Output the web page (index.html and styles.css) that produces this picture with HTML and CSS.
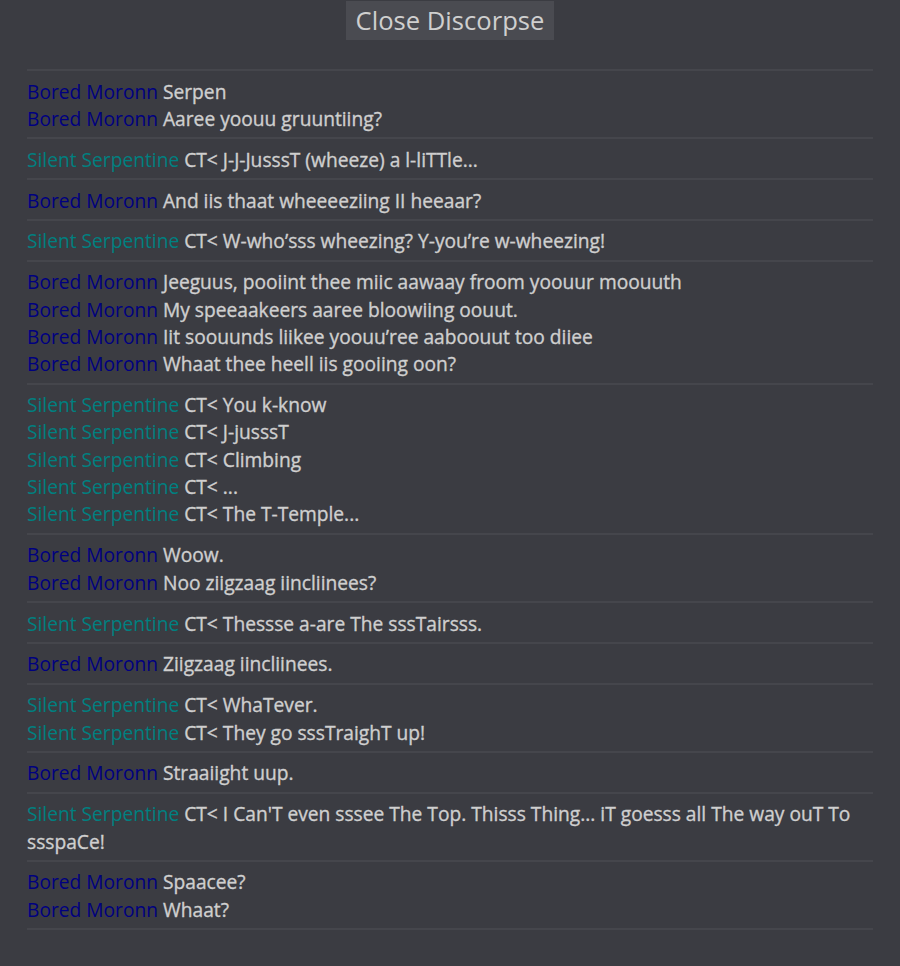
FILE: index.html
```html
<!DOCTYPE html>
<html>
<head>
<meta charset="utf-8">
<link rel="stylesheet" href="styles.css">
</head>
<body>
<div class="page">
  <div class="top">
    <button class="close-btn">Close Discorpse</button>
  </div>
  <div class="log">
    <div class="group">
      <div class="line"><span class="bm">Bored Moronn</span> Serpen</div>
      <div class="line"><span class="bm">Bored Moronn</span> Aaree yoouu gruuntiing?</div>
    </div>
    <div class="group">
      <div class="line"><span class="ss">Silent Serpentine</span> CT&lt; J-J-JusssT (wheeze) a l-liTTle...</div>
    </div>
    <div class="group">
      <div class="line"><span class="bm">Bored Moronn</span> And iis thaat wheeeeziing II heeaar?</div>
    </div>
    <div class="group">
      <div class="line"><span class="ss">Silent Serpentine</span> CT&lt; W-who’sss wheezing? Y-you’re w-wheezing!</div>
    </div>
    <div class="group">
      <div class="line"><span class="bm">Bored Moronn</span> Jeeguus, pooiint thee miic aawaay froom yoouur moouuth</div>
      <div class="line"><span class="bm">Bored Moronn</span> My speeaakeers aaree bloowiing oouut.</div>
      <div class="line"><span class="bm">Bored Moronn</span> Iit soouunds liikee yoouu’ree aaboouut too diiee</div>
      <div class="line"><span class="bm">Bored Moronn</span> Whaat thee heell iis gooiing oon?</div>
    </div>
    <div class="group">
      <div class="line"><span class="ss">Silent Serpentine</span> CT&lt; You k-know</div>
      <div class="line"><span class="ss">Silent Serpentine</span> CT&lt; J-jusssT</div>
      <div class="line"><span class="ss">Silent Serpentine</span> CT&lt; Climbing</div>
      <div class="line"><span class="ss">Silent Serpentine</span> CT&lt; ...</div>
      <div class="line"><span class="ss">Silent Serpentine</span> CT&lt; The T-Temple...</div>
    </div>
    <div class="group">
      <div class="line"><span class="bm">Bored Moronn</span> Woow.</div>
      <div class="line"><span class="bm">Bored Moronn</span> Noo ziigzaag iincliinees?</div>
    </div>
    <div class="group">
      <div class="line"><span class="ss">Silent Serpentine</span> CT&lt; Thessse a-are The sssTairsss.</div>
    </div>
    <div class="group">
      <div class="line"><span class="bm">Bored Moronn</span> Ziigzaag iincliinees.</div>
    </div>
    <div class="group">
      <div class="line"><span class="ss">Silent Serpentine</span> CT&lt; WhaTever.</div>
      <div class="line"><span class="ss">Silent Serpentine</span> CT&lt; They go sssTraighT up!</div>
    </div>
    <div class="group">
      <div class="line"><span class="bm">Bored Moronn</span> Straaiight uup.</div>
    </div>
    <div class="group">
      <div class="line"><span class="ss">Silent Serpentine</span> CT&lt; I Can'T even sssee The Top. Thisss Thing... iT goesss all The way ouT To ssspaCe!</div>
    </div>
    <div class="group">
      <div class="line"><span class="bm">Bored Moronn</span> Spaacee?</div>
      <div class="line"><span class="bm">Bored Moronn</span> Whaat?</div>
    </div>
  </div>
</div>
</body>
</html>
```
FILE: styles.css
```css
html, body {
  margin: 0;
  padding: 0;
  background: #3b3c42;
}
body {
  font-family: "Open Sans", "Liberation Sans", sans-serif;
  color: #cfcfcf;
}
.page {
  width: 846px;
  margin: 0 0 0 27px;
}
.top {
  display: flex;
  justify-content: center;
  padding-top: 1px;
  height: 71px;
  box-sizing: border-box;
  border-bottom: 2px solid #45464c;
}
.close-btn {
  font-family: "Open Sans", "Liberation Sans", sans-serif;
  font-size: 25.6px;
  color: #cfcfcf;
  background: #4a4b51;
  border: none;
  height: 39px;
  padding: 0 10px;
  line-height: 39px;
}
.group {
  padding: 6.5px 0 5px;
  border-bottom: 2px solid #45464c;
}
.line {
  font-size: 19.2px;
  line-height: 27.35px;
  font-weight: 400;
  -webkit-text-stroke: 0.35px #cfcfcf;
}
.bm, .ss {
  -webkit-text-stroke: 0;
}
.bm { color: #000080; }
.ss { color: #008080; }
```
